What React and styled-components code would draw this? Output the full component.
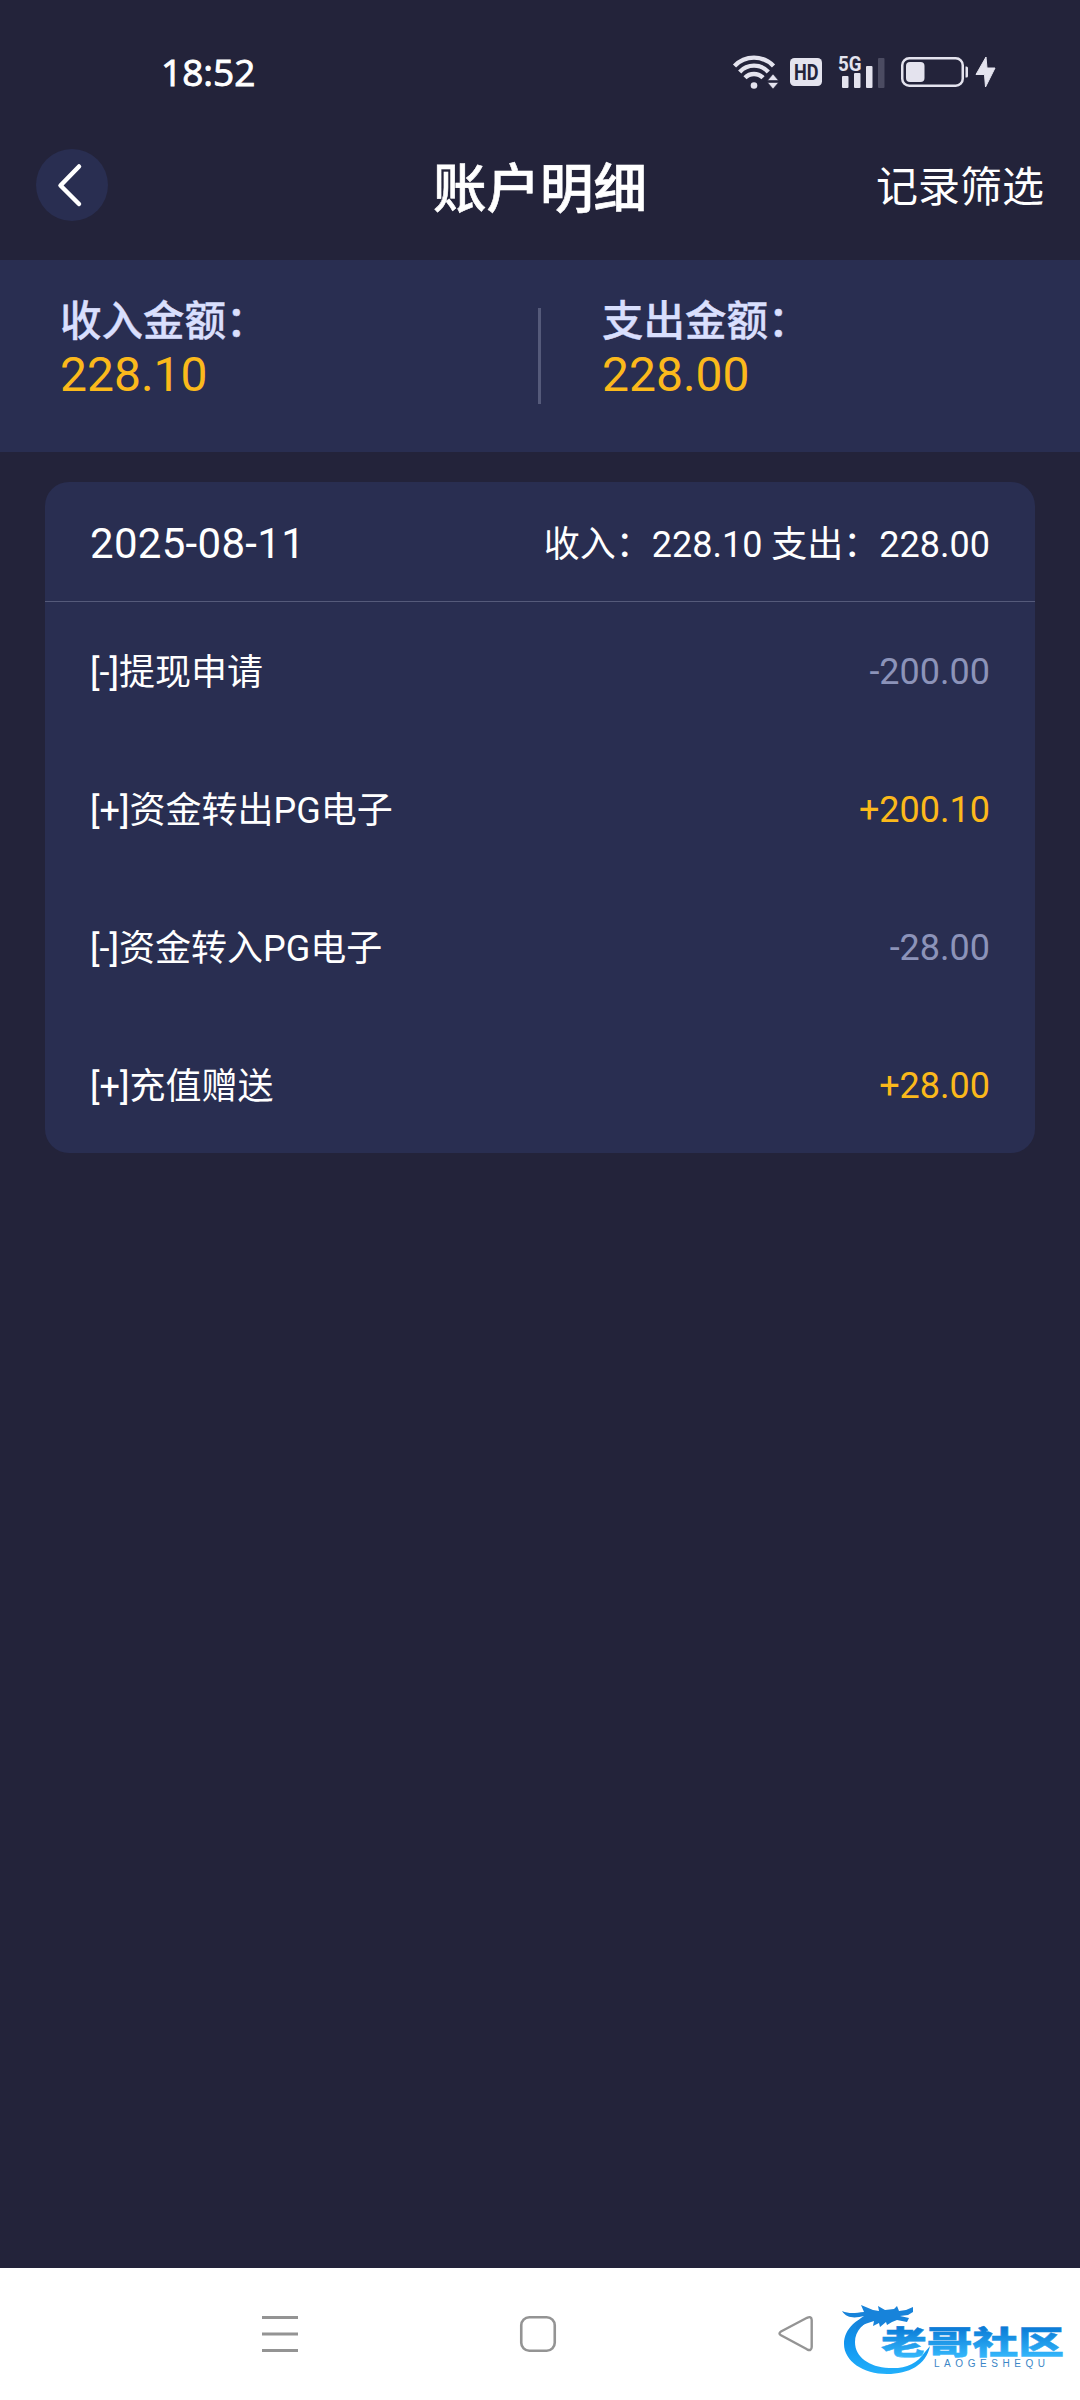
import React from 'react';
import styled, { createGlobalStyle } from 'styled-components';

const colors = {
  page: '#23233a',
  panel: '#292e51',
  line: '#555a7a',
  label: '#d9dffd',
  amber: '#fbb91b',
  muted: '#8c93b9',
  status: '#e4e3ee',
  nav: '#949494',
};

const GlobalStyle = createGlobalStyle`
  * {
    box-sizing: border-box;
  }

  body {
    margin: 0;
    background: ${colors.page};
    font-family: Roboto, 'Noto Sans CJK SC', sans-serif;
    color: #fff;
  }
`;

const Screen = styled.div`
  display: flex;
  flex-direction: column;
  width: 1080px;
  height: 2400px;
  background: ${colors.page};
`;

const StatusBar = styled.div`
  display: flex;
  align-items: center;
  justify-content: space-between;
  height: 110px;
  padding: 34px 84px 0 161px;
`;

const Clock = styled.span`
  font-family: 'Open Sans', sans-serif;
  font-size: 37px;
  line-height: 76px;
  -webkit-text-stroke: 0.9px #fff;
`;

const StatusIcons = styled.div`
  display: flex;
  align-items: center;
  height: 76px;

  svg {
    display: block;
    overflow: visible;
  }
`;

const IconSlot = styled.span`
  margin-left: ${({ $gap }) => $gap}px;
`;

const Header = styled.header`
  display: grid;
  grid-template-columns: 1fr auto 1fr;
  align-items: center;
  height: 150px;
  padding: 0 36px;
`;

const BackButton = styled.button`
  display: flex;
  align-items: center;
  justify-content: center;
  width: 72px;
  height: 72px;
  padding: 0;
  border: 0;
  border-radius: 50%;
  background: ${colors.panel};
`;

const Title = styled.h1`
  margin: 0;
  padding-top: 9px;
  font-size: 53.5px;
  font-weight: 500;
  line-height: 72px;
  -webkit-text-stroke: 0.6px #fff;
`;

const FilterLink = styled.span`
  justify-self: end;
  padding-top: 6px;
  font-size: 42px;
  line-height: 60px;
`;

const Totals = styled.section`
  display: flex;
  height: 192px;
  padding-top: 37px;
  background: ${colors.panel};
`;

const Total = styled.div`
  flex: 1;
  padding-left: 60px;
`;

const TotalsDivider = styled.div`
  width: 3px;
  height: 96px;
  margin: 11px 1px 0 0;
  background: ${colors.line};
`;

const TotalLabel = styled.div`
  font-size: 41.5px;
  font-weight: 500;
  line-height: 50px;
  color: ${colors.label};
  -webkit-text-stroke: 0.4px ${colors.label};
`;

const TotalValue = styled.div`
  font-size: 48px;
  line-height: 56px;
  color: ${colors.amber};
`;

const Card = styled.section`
  margin: 30px 45px 0;
  border-radius: 24px;
  background: ${colors.panel};
`;

const CardHeader = styled.div`
  display: flex;
  align-items: center;
  justify-content: space-between;
  height: 120px;
  padding: 4px 45px 0;
  border-bottom: 1px solid ${colors.line};
`;

const DateLabel = styled.span`
  font-size: 42px;
  letter-spacing: 0.3px;
`;

const DaySummary = styled.span`
  padding-bottom: 6px;
  font-size: 36px;
`;

const Row = styled.div`
  display: flex;
  align-items: center;
  justify-content: space-between;
  height: 138px;
  padding: 0 45px;
  font-size: 36px;

  &:last-child {
    height: 137px;
  }
`;

const RecordName = styled.span`
  padding-bottom: 4px;
`;

const Amount = styled.span`
  padding-top: 2px;
  color: ${({ $income }) => ($income ? colors.amber : colors.muted)};
`;

const NavBar = styled.nav`
  position: relative;
  display: flex;
  align-items: center;
  gap: 218px;
  height: 132px;
  margin-top: auto;
  padding-left: 260px;
  background: #fff;

  svg {
    display: block;
  }
`;

// Floats over the system navigation bar
const Watermark = styled.div`
  position: absolute;
  right: 12px;
  bottom: 20px;
`;

const Wifi = () => (
  <svg width="45" height="36" viewBox="0 0 45 36" fill="none">
    <g stroke={colors.status} strokeWidth="4.4">
      <path d="M1.5 12A27 27 0 0 1 40.5 12" />
      <path d="M6.7 17.9A19.5 19.5 0 0 1 35.3 17.9" />
      <path d="M12 23.8A12.5 12.5 0 0 1 30 23.8" />
    </g>
    <circle cx="21" cy="31.5" r="3.3" fill={colors.status} />
    <path
      d="M34.5 26.5l5.5-6.5 5.5 6.5zM34.5 28.5h11l-5.5 6.5z"
      fill={colors.status}
      stroke={colors.page}
      strokeWidth="0.6"
    />
  </svg>
);

const Hd = () => (
  <svg width="32" height="36" viewBox="0 -4 32 36">
    <rect width="32" height="28" rx="4.5" fill={colors.status} />
    <text
      x="4"
      y="22"
      fontSize="22.5"
      fontWeight="700"
      textLength="24.5"
      lengthAdjust="spacingAndGlyphs"
      fill={colors.page}
    >
      HD
    </text>
  </svg>
);

const Signal = () => (
  <svg width="48" height="46" viewBox="0 -6 48 46" fill={colors.status}>
    <text x="-1" y="16" fontSize="21" fontWeight="700" textLength="23.5" lengthAdjust="spacingAndGlyphs">
      5G
    </text>
    <rect x="3" y="21" width="6.5" height="12" rx="1" />
    <rect x="15" y="18" width="6.5" height="15" rx="1" />
    <rect x="27" y="11" width="6.5" height="22" rx="1" />
    <rect x="39" y="3" width="6.5" height="30" rx="1" fill="#4b4b61" />
  </svg>
);

const Battery = () => (
  <svg width="68" height="30" viewBox="0 0 68 30">
    <rect
      x="1.25"
      y="1.25"
      width="60.5"
      height="27.5"
      rx="7"
      fill="none"
      stroke={colors.status}
      strokeWidth="2.5"
    />
    <rect x="5" y="5" width="18.5" height="20" rx="4" fill={colors.status} />
    <path
      d="M64.5 9.5h1a1.5 1.5 0 0 1 1.5 1.5v8a1.5 1.5 0 0 1-1.5 1.5h-1z"
      fill={colors.status}
    />
  </svg>
);

const Bolt = () => (
  <svg width="21" height="32" viewBox="0 0 21 32">
    <path
      d="M11 1L1 18.5h8.5L10.5 31 20 12h-8z"
      fill={colors.status}
      stroke={colors.status}
      strokeLinejoin="round"
    />
  </svg>
);

const Chevron = () => (
  <svg width="72" height="72" viewBox="0 0 72 72" fill="none">
    <path
      d="M43 17.5L24.5 36.5l18.5 18.5"
      stroke="#fff"
      strokeWidth="4.5"
      strokeLinecap="round"
      strokeLinejoin="round"
    />
  </svg>
);

const MenuIcon = () => (
  <svg width="40" height="40" viewBox="0 0 40 40">
    <path d="M2 3.5h36M2 20h36M2 36.5h36" stroke={colors.nav} strokeWidth="3" />
  </svg>
);

const HomeIcon = () => (
  <svg width="40" height="40" viewBox="0 0 40 40">
    <rect
      x="3.25"
      y="3.25"
      width="33.5"
      height="33.5"
      rx="8"
      fill="none"
      stroke={colors.nav}
      strokeWidth="2.6"
    />
  </svg>
);

const BackIcon = () => (
  <svg width="40" height="40" viewBox="0 0 40 40">
    <path
      d="M5 17.5L31 3.8Q35.5 1.8 35.7 6V33Q35.5 37.5 31 35.3L5 21.3Q2 19.4 5 17.5Z"
      fill="none"
      stroke={colors.nav}
      strokeWidth="2.4"
    />
  </svg>
);

const CommunityLogo = () => (
  <svg width="226" height="80" viewBox="0 0 226 80">
    <defs>
      <linearGradient id="ring" x1="0" y1="0" x2="0" y2="1">
        <stop offset="0" stopColor="#1680d6" />
        <stop offset="0.5" stopColor="#1195ef" />
        <stop offset="1" stopColor="#22b0fb" />
      </linearGradient>
      <linearGradient id="letters" x1="0" y1="0" x2="0" y2="1">
        <stop offset="0.2" stopColor="#0877d4" />
        <stop offset="0.9" stopColor="#35b9fc" />
      </linearGradient>
    </defs>
    <path
      d="M36 13C15 16 2 29 2 44c0 17 19 30 43 30 22 0 39-9 43-28l-5 6c-8 12-20 17-36 16C27 67 13 57 13 42c0-11 8-20 22-24z"
      fill="url(#ring)"
    />
    {/* dragon head: whisker, mane and jaws */}
    <path
      d="M0 11c7 3 13 2 22 1l-3-7 12 5 6 1-1-5 7 4 9-1 3-3 2 5 7-1 7-3v5l-5 3-8 1 9 2-2 4-10-2-5 2-5 3-1-3-6 5-1-4-6 3 1-5-9 3c-4 2-7 4-9 6 0-7 4-12 8-14-8 2-17 3-22-5z"
      fill="#1783da"
    />
    <text
      x="39"
      y="53.5"
      fontFamily="'Noto Sans CJK SC', sans-serif"
      fontSize="32"
      fontWeight="900"
      textLength="183"
      lengthAdjust="spacingAndGlyphs"
      fill="url(#letters)"
      stroke="url(#letters)"
      strokeWidth="0.5"
    >
      老哥社区
    </text>
    <text
      x="92"
      y="66.5"
      fontFamily="'Liberation Sans', sans-serif"
      fontSize="10"
      textLength="111"
      fill="#3b86c6"
    >
      LAOGESHEQU
    </text>
  </svg>
);

const records = [
  { name: '[-]提现申请', amount: '-200.00' },
  { name: '[+]资金转出PG电子', amount: '+200.10', income: true },
  { name: '[-]资金转入PG电子', amount: '-28.00' },
  { name: '[+]充值赠送', amount: '+28.00', income: true },
];

const App = () => (
  <>
    <GlobalStyle />
    <Screen>
      <StatusBar>
        <Clock>18:52</Clock>
        <StatusIcons>
          <IconSlot $gap={0}>
            <Wifi />
          </IconSlot>
          <IconSlot $gap={12}>
            <Hd />
          </IconSlot>
          <IconSlot $gap={17}>
            <Signal />
          </IconSlot>
          <IconSlot $gap={14}>
            <Battery />
          </IconSlot>
          <IconSlot $gap={6}>
            <Bolt />
          </IconSlot>
        </StatusIcons>
      </StatusBar>
      <Header>
        <BackButton>
          <Chevron />
        </BackButton>
        <Title>账户明细</Title>
        <FilterLink>记录筛选</FilterLink>
      </Header>
      <Totals>
        <Total>
          <TotalLabel>收入金额：</TotalLabel>
          <TotalValue>228.10</TotalValue>
        </Total>
        <TotalsDivider />
        <Total>
          <TotalLabel>支出金额：</TotalLabel>
          <TotalValue>228.00</TotalValue>
        </Total>
      </Totals>
      <Card>
        <CardHeader>
          <DateLabel>2025-08-11</DateLabel>
          <DaySummary>收入：228.10 支出：228.00</DaySummary>
        </CardHeader>
        {records.map(({ name, amount, income }) => (
          <Row key={name}>
            <RecordName>{name}</RecordName>
            <Amount $income={income}>{amount}</Amount>
          </Row>
        ))}
      </Card>
      <NavBar>
        <MenuIcon />
        <HomeIcon />
        <BackIcon />
        <Watermark>
          <CommunityLogo />
        </Watermark>
      </NavBar>
    </Screen>
  </>
);

export default App;
